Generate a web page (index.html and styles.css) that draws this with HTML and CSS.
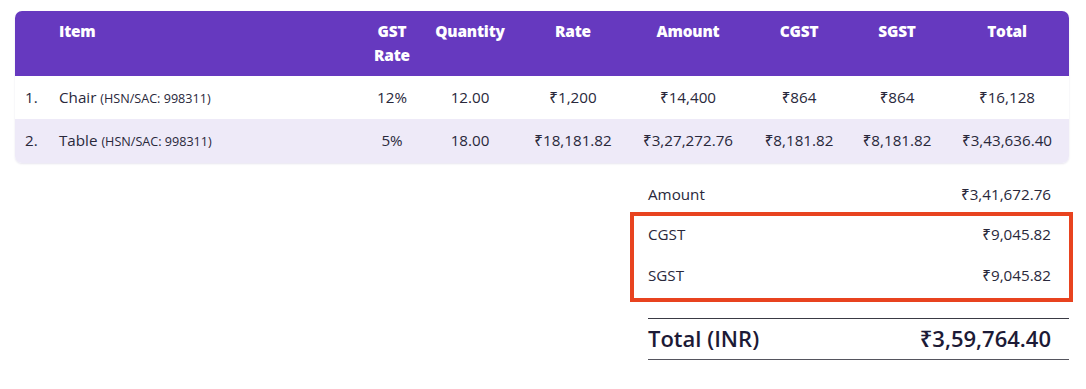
FILE: index.html
```html
<!DOCTYPE html>
<html>
<head>
<meta charset="utf-8">
<link rel="stylesheet" href="styles.css">
</head>
<body>
<div class="page">
  <div class="card">
    <table class="items">
      <colgroup>
        <col class="c-idx"><col class="c-item"><col class="c-gst"><col class="c-qty"><col class="c-rate"><col class="c-amt"><col class="c-cgst"><col class="c-sgst"><col class="c-total">
      </colgroup>
      <thead>
        <tr>
          <th></th>
          <th class="left">Item</th>
          <th>GST<br>Rate</th>
          <th>Quantity</th>
          <th>Rate</th>
          <th>Amount</th>
          <th>CGST</th>
          <th>SGST</th>
          <th>Total</th>
        </tr>
      </thead>
      <tbody>
        <tr>
          <td class="idx">1.</td>
          <td class="left">Chair <span class="hsn">(HSN/SAC: 998311)</span></td>
          <td>12%</td>
          <td>12.00</td>
          <td>₹1,200</td>
          <td>₹14,400</td>
          <td>₹864</td>
          <td>₹864</td>
          <td>₹16,128</td>
        </tr>
        <tr class="alt">
          <td class="idx">2.</td>
          <td class="left">Table <span class="hsn">(HSN/SAC: 998311)</span></td>
          <td>5%</td>
          <td>18.00</td>
          <td>₹18,181.82</td>
          <td>₹3,27,272.76</td>
          <td>₹8,181.82</td>
          <td>₹8,181.82</td>
          <td>₹3,43,636.40</td>
        </tr>
      </tbody>
    </table>
  </div>

  <div class="summary">
    <div class="srow amount-row"><span>Amount</span><span>₹3,41,672.76</span></div>
    <div class="highlight">
      <div class="srow tax-row"><span>CGST</span><span>₹9,045.82</span></div>
      <div class="srow tax-row"><span>SGST</span><span>₹9,045.82</span></div>
    </div>
    <div class="srow total-row"><span>Total (INR)</span><span>₹3,59,764.40</span></div>
  </div>
</div>
</body>
</html>
```

FILE: styles.css
```css
* { box-sizing: border-box; }

body {
  margin: 0;
  background: #ffffff;
  font-family: "Open Sans", "Noto Sans", "DejaVu Sans", sans-serif;
  color: #2b2a3d;
}

.page {
  padding: 11px 17px 0 15px;
  display: flex;
  flex-direction: column;
}

.card {
  width: 1054px;
  border-radius: 7px;
  overflow: hidden;
  box-shadow: 0 1px 2px rgba(60, 40, 120, 0.12);
}

.items {
  width: 1054px;
  border-collapse: collapse;
  table-layout: fixed;
}

.c-idx { width: 35px; }
.c-item { width: 313px; }
.c-gst { width: 58px; }
.c-qty { width: 98px; }
.c-rate { width: 108px; }
.c-amt { width: 122px; }
.c-cgst { width: 100px; }
.c-sgst { width: 96px; }
.c-total { width: 124px; }

.items thead tr {
  background: #6639bf;
}

.items th {
  color: #ffffff;
  font-weight: 800;
  font-size: 15.4px;
  line-height: 24px;
  height: 65px;
  padding: 9px 0 8px;
  vertical-align: top;
  text-align: center;
  letter-spacing: -0.2px;
  white-space: nowrap;
}

.items th.left {
  text-align: left;
  padding-left: 9px;
}

.items td {
  font-size: 15.2px;
  height: 43px;
  padding: 0 0 2px;
  text-align: center;
  vertical-align: middle;
  color: #29283b;
  white-space: nowrap;
}

.items tr.alt td {
  background: #eeeaf8;
  height: 44px;
}

.items td.idx {
  text-align: left;
  padding-left: 10px;
}

.items td.left {
  text-align: left;
  padding-left: 9px;
}

.hsn {
  font-size: 12.6px;
}

.summary {
  width: 421px;
  margin-left: 633px;
  margin-top: 10px;
  display: flex;
  flex-direction: column;
}

.srow {
  display: flex;
  justify-content: space-between;
  align-items: center;
  height: 41px;
  padding-right: 18px;
  font-size: 15.2px;
  color: #29283b;
}

.amount-row {
  height: 42px;
}

.tax-row {
  padding-bottom: 6px;
}

.highlight {
  margin: -3px -4px 0 -18px;
  padding-left: 14px;
  border: 4px solid #e8431f;
}

.total-row {
  margin-top: 16px;
  height: 42px;
  padding-bottom: 3px;
  border-top: 1px solid #3a3a44;
  border-bottom: 1px solid #55555e;
  font-size: 22px;
  font-weight: 600;
  color: #1c1a36;
}
```
